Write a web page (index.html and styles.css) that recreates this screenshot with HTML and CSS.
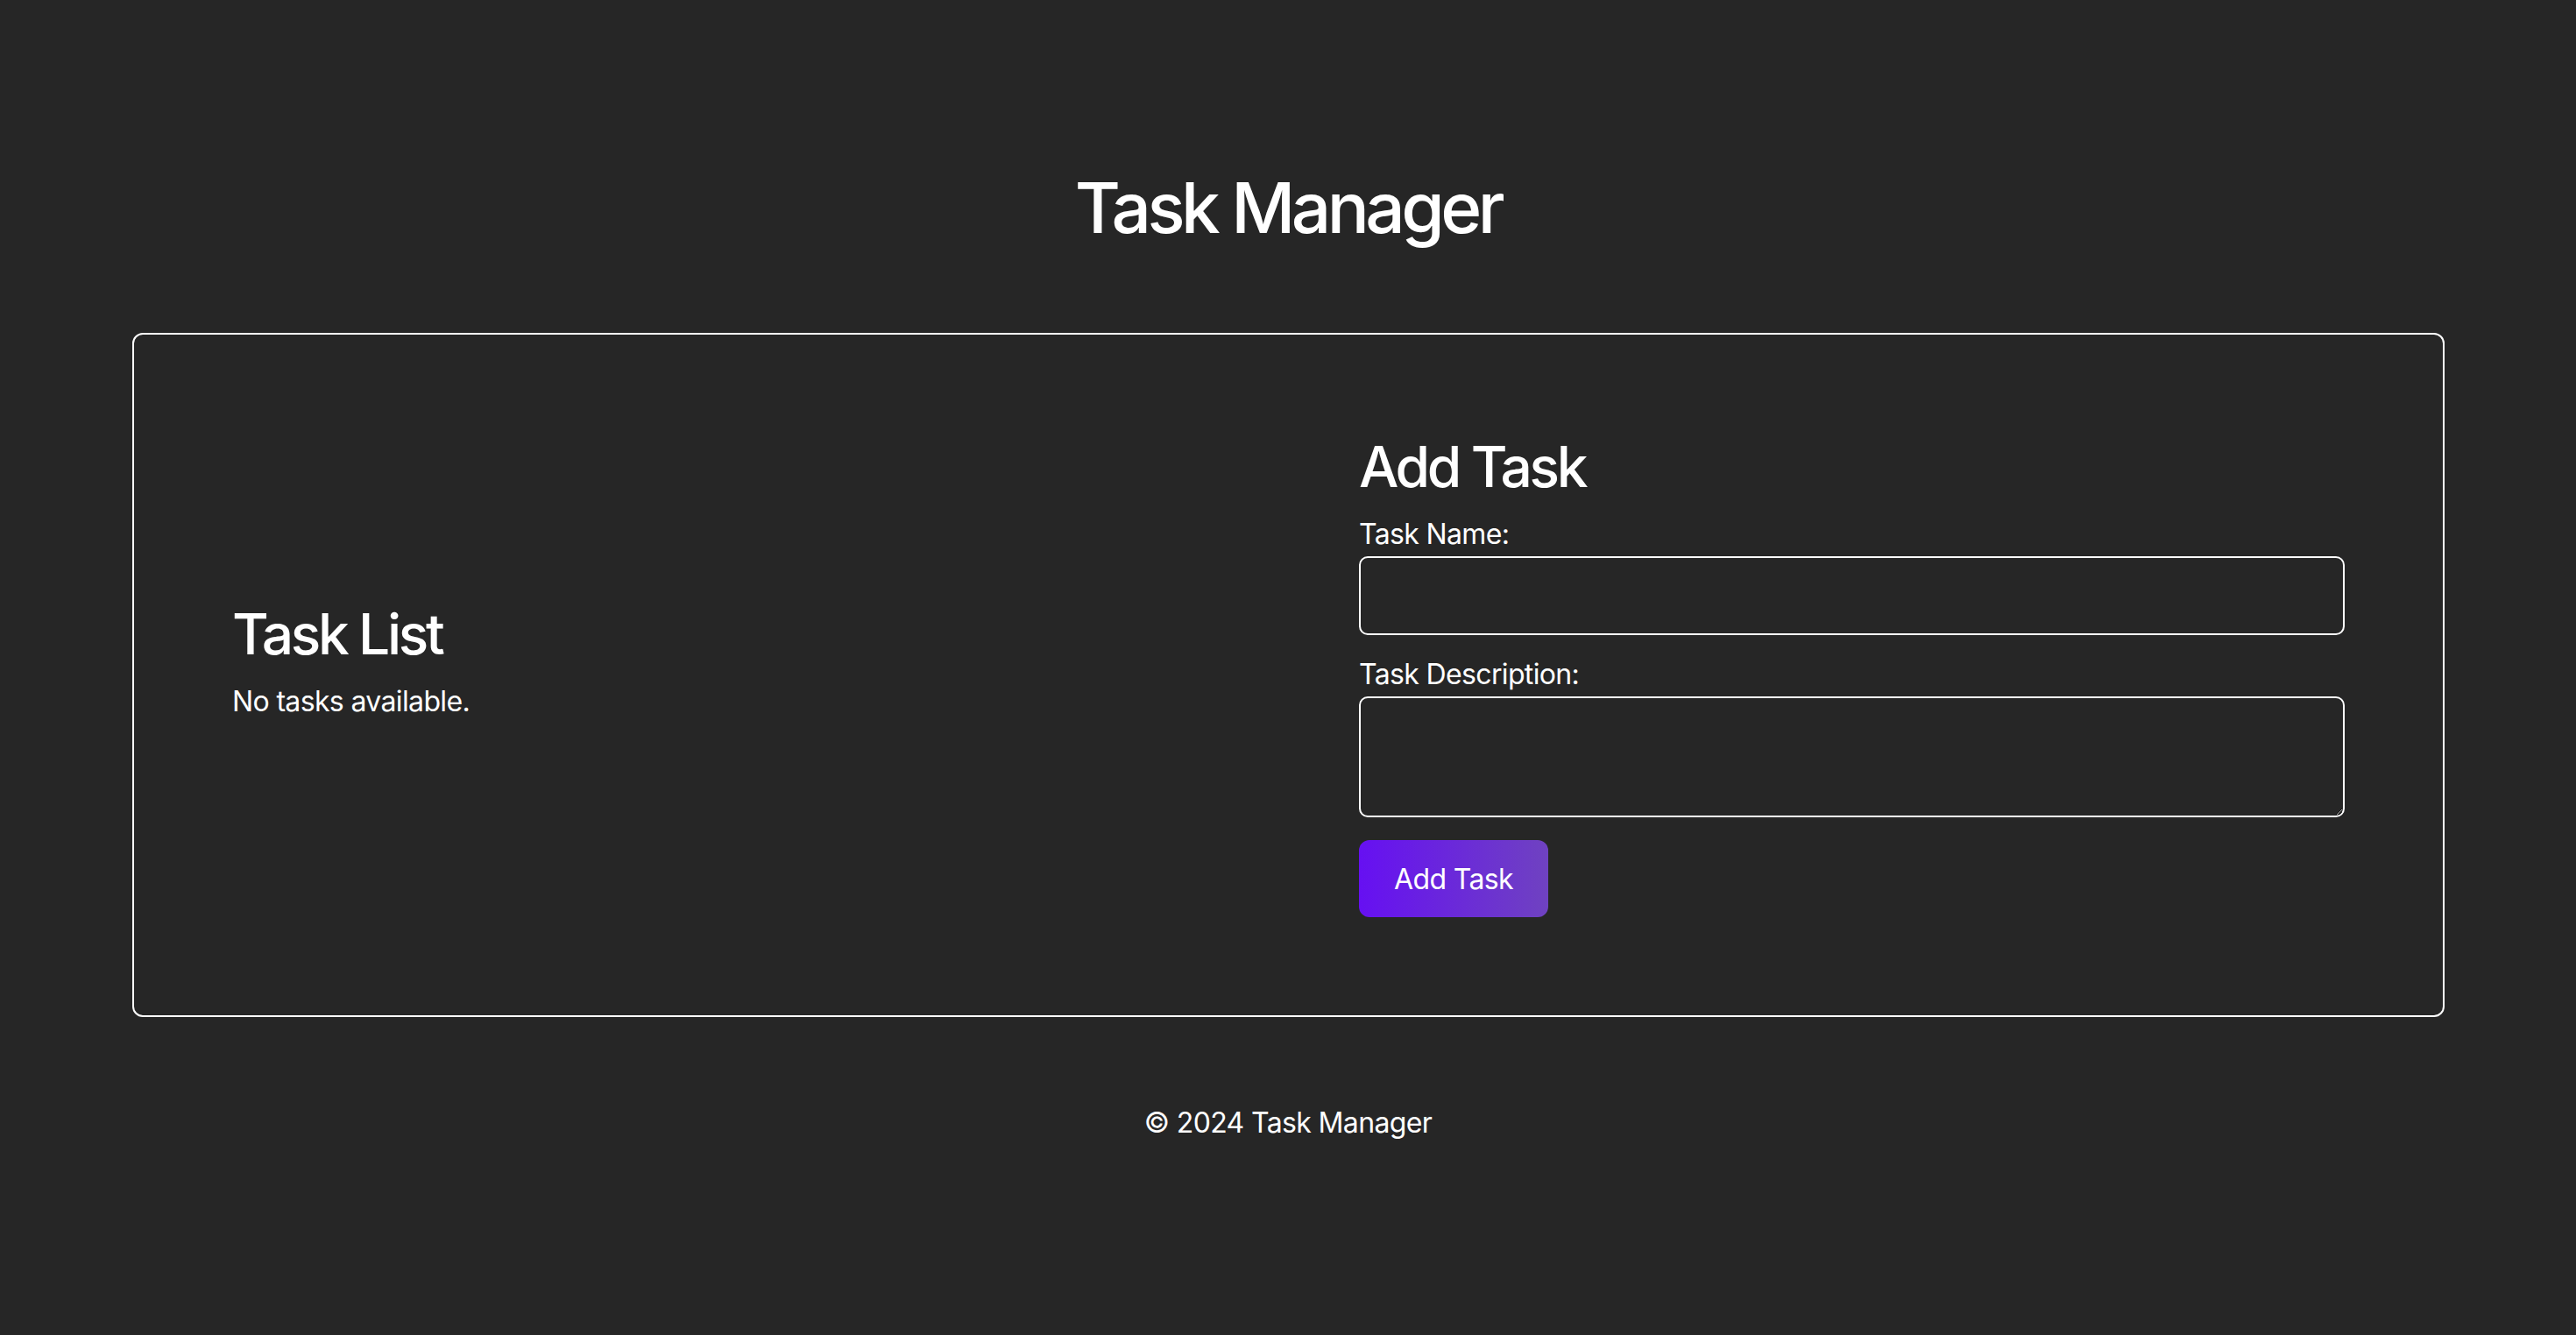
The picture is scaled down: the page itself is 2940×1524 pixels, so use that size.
FILE: index.html
```html
<!DOCTYPE html>
<html lang="en">
<head>
<meta charset="utf-8">
<title>Task Manager</title>
<link rel="stylesheet" href="styles.css">
</head>
<body>
<header class="site-header">
  <h1 class="site-title">Task Manager</h1>
</header>
<main class="board">
  <section class="task-list">
    <h2 class="section-title">Task List</h2>
    <p class="empty">No tasks available.</p>
  </section>
  <section class="task-form">
    <h2 class="section-title">Add Task</h2>
    <form class="form">
      <label class="field-label" for="name">Task Name:</label>
      <input class="field-input" id="name" type="text">
      <label class="field-label" for="desc">Task Description:</label>
      <textarea class="field-textarea" id="desc"></textarea>
      <button class="btn" type="button">Add Task</button>
    </form>
  </section>
</main>
<footer class="site-footer">
  <p class="copy">© 2024 Task Manager</p>
</footer>
</body>
</html>
```
FILE: styles.css
```css
* { box-sizing: border-box; }
html, body { margin: 0; padding: 0; }
body {
  background: #262626;
  color: #ffffff;
  font-family: Inter, "Noto Sans", sans-serif;
  font-size: 32px;
  line-height: 38px;
  letter-spacing: -0.02em;
  min-height: 1524px;
}
.site-header {
  padding-top: 189px;
}
.site-title {
  margin: 0;
  text-align: center;
  font-size: 80px;
  line-height: 96px;
  font-weight: 500;
  letter-spacing: -0.056em;
}
.board {
  margin: 95px 150px 0 151px;
  border: 2px solid #ffffff;
  border-radius: 12px;
  padding: 112px;
  display: grid;
  grid-template-columns: 1fr 1fr;
  column-gap: 161px;
  align-items: center;
}
.section-title {
  margin: 0 0 20px;
  font-size: 64px;
  line-height: 77px;
  font-weight: 500;
  letter-spacing: -0.052em;
}
.empty {
  margin: 0 0 37px;
}
.form {
  display: flex;
  flex-direction: column;
  align-items: flex-start;
}
.field-label {
  display: block;
  margin-bottom: 6px;
}
.field-input,
.field-textarea {
  display: block;
  width: 100%;
  background: transparent;
  color: #fff;
  border: 2px solid #ffffff;
  border-radius: 10px;
  font-family: inherit;
  font-size: 32px;
  padding: 16px 20px;
  margin: 0 0 26px;
  outline: none;
}
.field-input { height: 90px; }
.field-textarea { height: 138px; resize: vertical; }
.btn {
  height: 88px;
  padding: 0 40px;
  border: none;
  border-radius: 12px;
  background: linear-gradient(to right, #6610f2, #6f42c1);
  color: #fff;
  font-family: inherit;
  font-size: 32px;
  letter-spacing: -0.02em;
  cursor: pointer;
}
.site-footer {
  margin-top: 102px;
  text-align: center;
}
.copy { margin: 0; }
```
